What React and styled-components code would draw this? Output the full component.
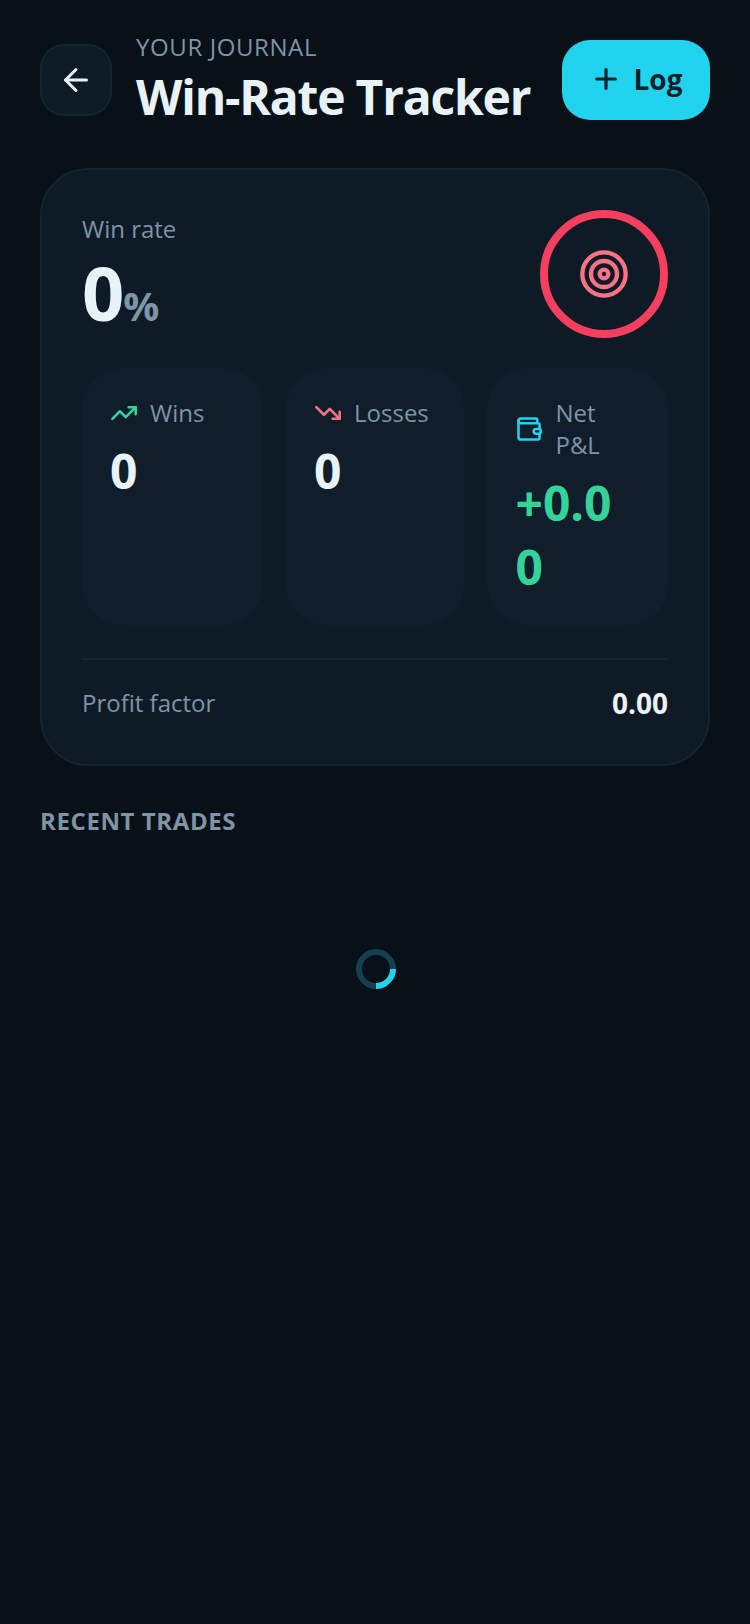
import styled, { createGlobalStyle } from "styled-components";
import { ArrowLeft, Plus, Target, TrendingUp, TrendingDown, Wallet } from "lucide-react";

const Global = createGlobalStyle`
  html, body {
    margin: 0;
    background: #081018;
  }
  * {
    box-sizing: border-box;
  }
`;
const Page = styled.div`
  min-height: 1624px;
  background: #081018;
  padding: 32px 40px 0;
  font-family: "Open Sans", "Noto Sans", sans-serif;
`;
const Header = styled.div`
  display: flex;
  align-items: center;
  justify-content: space-between;
  height: 96px;
`;
const HeaderLeft = styled.div`
  display: flex;
  align-items: center;
  gap: 24px;
`;
const BackButton = styled.div`
  width: 72px;
  height: 72px;
  border-radius: 24px;
  background: #0e1a25;
  border: 2px solid #15232f;
  display: flex;
  align-items: center;
  justify-content: center;
  color: #e8f3f9;
`;
const Overline = styled.div`
  font-size: 24px;
  line-height: 32px;
  margin-bottom: 2px;
  color: #7e95a5;
  letter-spacing: 0.6px;
`;
const Title = styled.div`
  font-size: 48px;
  line-height: 64px;
  font-weight: 700;
  letter-spacing: -1.2px;
  color: #e8f3f9;
`;
const LogButton = styled.div`
  width: 148px;
  height: 80px;
  padding-bottom: 2px;
  border-radius: 28px;
  background: #22d3ee;
  color: #06202b;
  display: flex;
  align-items: center;
  justify-content: center;
  gap: 12px;
  font-size: 28px;
  font-weight: 700;
`;
const Card = styled.div`
  margin-top: 40px;
  background: #0e1a25;
  border: 2px solid #15232f;
  border-radius: 48px;
  padding: 40px;
`;
const CardTop = styled.div`
  display: flex;
  justify-content: space-between;
  align-items: flex-start;
`;
const RateBlock = styled.div`
  padding-top: 1px;
`;
const Label = styled.div`
  font-size: 24px;
  line-height: 36px;
  color: #7e95a5;
`;
const Rate = styled.div`
  margin-top: 2px;
  font-size: 74px;
  line-height: 88px;
  font-weight: 700;
  letter-spacing: -1px;
  color: #e8f3f9;
  span {
    font-size: 40px;
    line-height: 0;
    letter-spacing: 0;
    color: #7e95a5;
  }
`;
const Ring = styled.div`
  width: 128px;
  height: 128px;
  border-radius: 50%;
  border: 8px solid #f43f5e;
  display: flex;
  align-items: center;
  justify-content: center;
  color: #fb7185;
`;
const Tiles = styled.div`
  display: grid;
  grid-template-columns: 1.015fr 1fr 1.015fr;
  gap: 23.5px;
  margin-top: 30px;
`;
const Tile = styled.div`
  background: #101d2a;
  border-radius: 40px;
  padding: 29px 30px 26px 28px;
  min-width: 0;
`;
const TileHead = styled.div`
  display: flex;
  align-items: center;
  gap: 12px;
  svg {
    flex-shrink: 0;
  }
`;
const TileLabel = styled.div`
  font-size: 24px;
  line-height: 32px;
  color: #7e95a5;
`;
const TileValue = styled.div`
  margin-top: 10px;
  font-size: 48px;
  line-height: 64px;
  font-weight: 700;
  color: ${(p) => p.$color || "#e8f3f9"};
  overflow-wrap: anywhere;
`;
const FactorRow = styled.div`
  margin-top: 33px;
  padding: 25px 0 3px;
  border-top: 2px solid #15232f;
  display: flex;
  justify-content: space-between;
  align-items: center;
`;
const FactorValue = styled.div`
  font-size: 28px;
  line-height: 36px;
  font-weight: 700;
  color: #e8f3f9;
`;
const SectionTitle = styled.div`
  margin-top: 39px;
  font-size: 24px;
  line-height: 32px;
  font-weight: 700;
  letter-spacing: 0.6px;
  color: #7e95a5;
`;
const Loading = styled.div`
  display: flex;
  justify-content: center;
  margin-top: 112px;
  padding-left: 2px;
`;
const Spinner = styled.div`
  width: 40px;
  height: 40px;
  border-radius: 50%;
  border: 6px solid #134150;
  border-right-color: #22d3ee;
  transform: rotate(45deg);
`;

function App() {
  return (
    <Page>
      <Global />
      <Header>
        <HeaderLeft>
          <BackButton>
            <ArrowLeft size={36} strokeWidth={2} />
          </BackButton>
          <div>
            <Overline>YOUR JOURNAL</Overline>
            <Title>Win-Rate Tracker</Title>
          </div>
        </HeaderLeft>
        <LogButton>
          <Plus size={32} strokeWidth={2.4} />
          Log
        </LogButton>
      </Header>
      <Card>
        <CardTop>
          <RateBlock>
            <Label>Win rate</Label>
            <Rate>
              0<span>%</span>
            </Rate>
          </RateBlock>
          <Ring>
            <Target size={52} strokeWidth={2} />
          </Ring>
        </CardTop>
        <Tiles>
          <Tile>
            <TileHead>
              <TrendingUp size={28} color="#34d399" strokeWidth={2.2} />
              <TileLabel>Wins</TileLabel>
            </TileHead>
            <TileValue>0</TileValue>
          </Tile>
          <Tile>
            <TileHead>
              <TrendingDown size={28} color="#fb7185" strokeWidth={2.2} />
              <TileLabel>Losses</TileLabel>
            </TileHead>
            <TileValue>0</TileValue>
          </Tile>
          <Tile>
            <TileHead>
              <Wallet size={28} color="#22d3ee" strokeWidth={2.2} />
              <TileLabel>Net P&amp;L</TileLabel>
            </TileHead>
            <TileValue $color="#34d399">+0.00</TileValue>
          </Tile>
        </Tiles>
        <FactorRow>
          <Label>Profit factor</Label>
          <FactorValue>0.00</FactorValue>
        </FactorRow>
      </Card>
      <SectionTitle>RECENT TRADES</SectionTitle>
      <Loading>
        <Spinner />
      </Loading>
    </Page>
  );
}

export default App;
